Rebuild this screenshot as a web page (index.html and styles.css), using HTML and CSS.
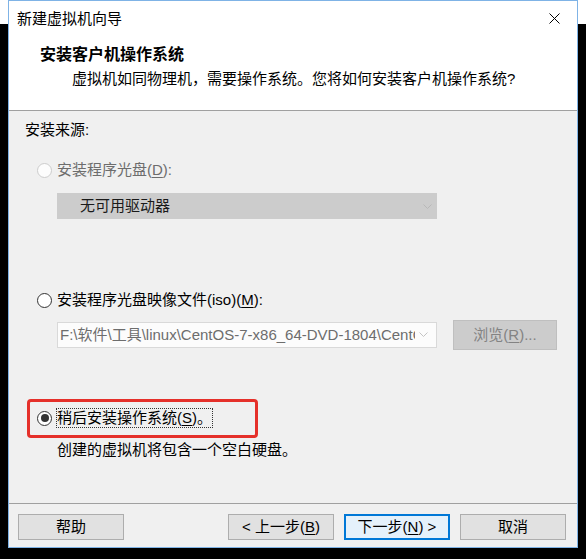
FILE: index.html
```html
<!DOCTYPE html>
<html lang="zh-CN">
<head>
<meta charset="utf-8">
<title>新建虚拟机向导</title>
<link rel="stylesheet" href="styles.css">
</head>
<body>
<div class="window">
  <div class="titlebar">
    <span class="title">新建虚拟机向导</span>
    <div class="close">
      <svg width="11" height="11" viewBox="0 0 11 11"><path d="M0.5 0.5 L10.5 10.5 M10.5 0.5 L0.5 10.5" stroke="#000" stroke-width="1" fill="none"/></svg>
    </div>
  </div>
  <div class="header">
    <div class="h-title">安装客户机操作系统</div>
    <div class="h-sub">虚拟机如同物理机，需要操作系统。您将如何安装客户机操作系统?</div>
  </div>
  <div class="content">
    <div class="label">安装来源:</div>

    <div class="radio-row row1 disabled">
      <span class="radio"></span>
      <span class="rtext">安装程序光盘(<u>D</u>):</span>
    </div>
    <div class="combo combo-disabled">
      <span class="ctext">无可用驱动器</span>
      <svg class="chev" width="9" height="5" viewBox="0 0 9 5"><path d="M0.5 0.5 L4.5 4.5 L8.5 0.5" stroke="#b8b8b8" fill="none"/></svg>
    </div>

    <div class="radio-row row2">
      <span class="radio"></span>
      <span class="rtext">安装程序光盘映像文件(iso)(<u>M</u>):</span>
    </div>
    <div class="iso-row">
      <div class="combo combo-iso">
        <span class="ctext">F:\软件\工具\linux\CentOS-7-x86_64-DVD-1804\CentOS-7-x86_64-DVD-1804.iso</span>
        <svg class="chev" width="9" height="5" viewBox="0 0 9 5"><path d="M0.5 0.5 L4.5 4.5 L8.5 0.5" stroke="#c4c4c4" fill="none"/></svg>
      </div>
      <div class="btn-browse"><span>浏览(<u>R</u>)...</span></div>
    </div>

    <div class="radio-row row3">
      <span class="radio checked"></span>
      <span class="rtext focus">稍后安装操作系统(<u>S</u>)。</span>
      <div class="highlight"></div>
    </div>
    <div class="desc">创建的虚拟机将包含一个空白硬盘。</div>
  </div>
  <div class="footer">
    <div class="btn"><span>帮助</span></div>
    <div class="btn btn-back"><span>&lt; 上一步(<u>B</u>)</span></div>
    <div class="btn btn-next"><span>下一步(<u>N</u>) &gt;</span></div>
    <div class="btn"><span>取消</span></div>
  </div>
</div>
</body>
</html>
```

FILE: styles.css
```css
html, body {
  margin: 0;
  padding: 0;
}
body {
  width: 586px;
  height: 559px;
  background: linear-gradient(#ffffff 0, #ffffff 24px, #000000 24px);
  font-family: "Liberation Sans", "Noto Sans CJK SC", sans-serif;
  font-size: 15px;
  color: #000;
  overflow: hidden;
}
u {
  text-decoration: underline;
  text-underline-offset: 2px;
}
.window {
  margin-left: 8px;
  width: 570px;
  height: 548px;
  box-sizing: border-box;
  border: 1px solid #7fb3e6;
  background: #f0f0f0;
  display: flex;
  flex-direction: column;
}
.titlebar {
  height: 30px;
  box-sizing: border-box;
  padding-top: 6px;
  background: #fff;
  display: flex;
  align-items: center;
}
.title {
  padding-left: 8px;
  line-height: 20px;
}
.close {
  margin-left: auto;
  width: 45px;
  height: 24px;
  display: flex;
  align-items: center;
  justify-content: center;
  margin-top: -2px;
}
.header {
  height: 80px;
  box-sizing: border-box;
  background: #fff;
  border-bottom: 1px solid #a0a0a0;
  padding-top: 14px;
}
.h-title {
  padding-left: 31px;
  font-size: 16px;
  font-weight: bold;
  line-height: 20px;
}
.h-sub {
  padding-left: 63px;
  margin-top: 4px;
  line-height: 20px;
}
.content {
  flex: 1;
  padding-top: 9px;
  padding-left: 16px;
  display: flex;
  flex-direction: column;
  align-items: flex-start;
}
.label {
  line-height: 20px;
}
.radio-row {
  margin-left: 12px;
  display: flex;
  align-items: center;
  height: 20px;
  position: relative;
}
.row1 { margin-top: 20px; }
.row2 { margin-top: 71px; }
.row3 { margin-top: 59px; }
.radio {
  width: 15px;
  height: 15px;
  box-sizing: border-box;
  border: 1px solid #333;
  border-radius: 50%;
  background: #fff;
  margin-right: 5px;
  display: flex;
  align-items: center;
  justify-content: center;
}
.disabled .radio {
  border-color: #cccccc;
  background: #fcfcfc;
}
.disabled .rtext {
  color: #6d6d6d;
}
.radio.checked::after {
  content: "";
  width: 8px;
  height: 8px;
  border-radius: 50%;
  background: #333;
}
.rtext {
  line-height: 20px;
}
.focus {
  outline: 1px dotted #333;
  outline-offset: -1px;
  padding: 0 1px;
  margin-left: -1px;
}
.highlight {
  position: absolute;
  left: -10px;
  top: -9px;
  width: 231px;
  height: 39px;
  box-sizing: border-box;
  border: 3px solid #e5302a;
  border-radius: 4px;
}
.combo {
  margin-left: 32px;
  width: 380px;
  height: 26px;
  box-sizing: border-box;
  display: flex;
  align-items: center;
}
.combo .ctext {
  flex: 1;
  overflow: hidden;
  white-space: nowrap;
  line-height: 20px;
}
.combo-disabled {
  margin-top: 13px;
  background: #cccccc;
  border: 1px solid #cccccc;
  padding-left: 22px;
}
.combo-disabled .ctext {
  color: #1a1a1a;
}
.combo-disabled .chev {
  margin: 0 4px 0 8px;
}
.iso-row {
  margin-top: 10px;
  height: 29px;
  display: flex;
  align-items: center;
}
.combo-iso {
  background: #fcfcfc;
  border: 1px solid #d9d9d9;
  padding-left: 2px;
}
.combo-iso .ctext {
  color: #6d6d6d;
}
.combo-iso .chev {
  margin: 0 8px 0 4px;
}
.btn-browse {
  margin-left: 16px;
  width: 104px;
  height: 30px;
  box-sizing: border-box;
  background: #cccccc;
  border: 1px solid #bfbfbf;
  color: #838383;
  display: flex;
  align-items: center;
  justify-content: center;
  line-height: 20px;
}
.desc {
  margin-top: 12px;
  margin-left: 32px;
  line-height: 20px;
}
.footer {
  height: 44px;
  box-sizing: border-box;
  border-top: 1px solid #a0a0a0;
  padding: 10px 11px 0 9px;
  display: flex;
  align-items: flex-start;
}
.btn {
  width: 106px;
  height: 26px;
  box-sizing: border-box;
  background: #e1e1e1;
  border: 1px solid #adadad;
  display: flex;
  align-items: center;
  justify-content: center;
  line-height: 20px;
  margin-left: 10px;
}
.footer .btn:first-child {
  margin-left: 0;
}
.btn-back {
  margin-left: auto;
}
.btn-next {
  border: 2px solid #0078d7;
  background: #e5f1fb;
}
```
